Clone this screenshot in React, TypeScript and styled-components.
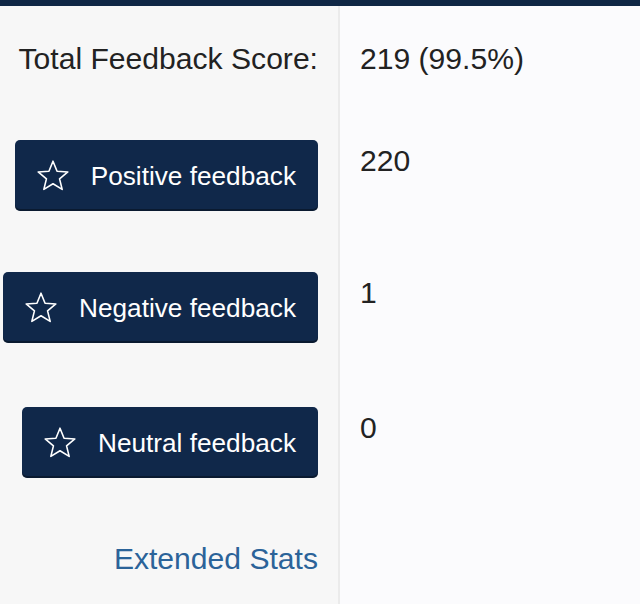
import React from 'react';
import styled, { createGlobalStyle } from 'styled-components';

const GlobalStyle = createGlobalStyle`
    html, body {
        margin: 0;
        padding: 0;
        height: 100%;
    }
    body {
        font-family: "Liberation Sans", Arial, Helvetica, sans-serif;
        color: #222;
        background-color: #fbfbfd;
    }
    #root {
        height: 100%;
    }
`;

const Page = styled.div`
    display: flex;
    flex-direction: column;
    height: 100vh;
`;

const TopBar = styled.div`
    height: 6px;
    flex: none;
    background-color: #0f2745;
`;

const Stats = styled.div`
    flex: 1;
    display: grid;
    grid-template-columns: 340px 1fr;
    grid-template-rows: repeat(4, auto) 1fr;
`;

const LabelCell = styled.div<{ $top: number }>`
    box-sizing: border-box;
    padding: ${(p) => p.$top}px 20px 0 0;
    background-color: #f7f7f7;
    border-right: 2px solid #ebebeb;
    text-align: right;
`;

const ValueCell = styled.div<{ $top: number }>`
    padding: ${(p) => p.$top}px 0 0 20px;
`;

const Text = styled.div`
    font-size: 30.1px;
    line-height: 34px;
    color: #222;
`;

const FeedbackButton = styled.button`
    display: inline-flex;
    align-items: center;
    gap: 22px;
    height: 71px;
    box-sizing: border-box;
    padding: 0 22px 0 22px;
    border: none;
    border-radius: 5px;
    background-color: #10284a;
    box-shadow: inset 0 -2px 0 rgba(0, 0, 0, 0.35);
    color: #fff;
    font-family: "Liberation Sans", Arial, Helvetica, sans-serif;
    font-size: 26.2px;
    line-height: 30px;
    cursor: pointer;
`;

const Link = styled.a`
    font-size: 30.1px;
    line-height: 34px;
    color: #2b6399;
    text-decoration: none;
`;

const starPoints = (() => {
    const pts: string[] = [];
    const cx = 16;
    const cy = 16.8;
    const outer = 15.6;
    const inner = 6.9;
    for (let i = 0; i < 10; i++) {
        const r = i % 2 === 0 ? outer : inner;
        const a = (Math.PI / 5) * i - Math.PI / 2;
        pts.push(`${(cx + r * Math.cos(a)).toFixed(2)},${(cy + r * Math.sin(a)).toFixed(2)}`);
    }
    return pts.join(' ');
})();

const Star: React.FC = () => (
    <svg width="32" height="32" viewBox="0 0 32 32" fill="none">
        <polygon points={starPoints} stroke="#fff" strokeWidth="1.6" strokeLinejoin="round" />
    </svg>
);

const rows = [
    { label: 'Positive feedback', value: '220', top: 64 },
    { label: 'Negative feedback', value: '1', top: 61 },
    { label: 'Neutral feedback', value: '0', top: 64 },
];

const App: React.FC = () => {
    return (
        <Page>
            <GlobalStyle />
            <TopBar />
            <Stats>
                <LabelCell $top={36}>
                    <Text>Total Feedback Score:</Text>
                </LabelCell>
                <ValueCell $top={36}>
                    <Text>219 (99.5%)</Text>
                </ValueCell>

                {rows.map((row) => (
                    <React.Fragment key={row.label}>
                        <LabelCell $top={row.top}>
                            <FeedbackButton>
                                <Star />
                                {row.label}
                            </FeedbackButton>
                        </LabelCell>
                        <ValueCell $top={row.top + 4}>
                            <Text>{row.value}</Text>
                        </ValueCell>
                    </React.Fragment>
                ))}

                <LabelCell $top={64}>
                    <Link href="#">Extended Stats</Link>
                </LabelCell>
                <ValueCell $top={64} />
            </Stats>
        </Page>
    );
};

export default App;
